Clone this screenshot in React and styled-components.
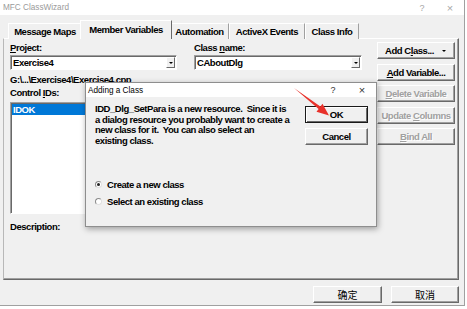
import React from 'react'
import styled, { createGlobalStyle } from 'styled-components'

const UI_FONT = '"Liberation Sans", Arial, sans-serif'
const CJK_FONT = '"Noto Sans CJK SC", "Liberation Sans", sans-serif'

const GlobalStyle = createGlobalStyle`
  html, body { margin: 0; padding: 0; background: #fff; }
  body { font-family: ${UI_FONT}; }
  * { box-sizing: border-box; }
`

const uiText = `
  font-family: ${UI_FONT};
  font-size: 9.5px;
  font-weight: bold;
  letter-spacing: -0.45px;
`

const Window = styled.div`
  position: relative;
  width: 465px;
  height: 306px;
  background: #f0f0f0;
  border-right: 1px solid #a0a0a0;
  border-bottom: 1px solid #a0a0a0;
  display: flex;
  flex-direction: column;
  overflow: hidden;
`

const TitleBar = styled.div`
  height: ${p => p.$h}px;
  flex: none;
  background: #fff;
  display: flex;
  align-items: center;
  padding-left: ${p => p.$pad}px;
  font: 8.2px ${UI_FONT};
  color: ${p => (p.$inactive ? '#9a9a9a' : '#000')};
`

const TitleText = styled.span`
  flex: 1;
`

const TitleGlyph = styled.span`
  width: ${p => p.$w}px;
  text-align: center;
  font: ${p => p.$size}px ${UI_FONT};
  color: ${p => (p.$inactive ? '#a8a8a8' : '#333')};
`

const Body = styled.div`
  flex: 1;
  display: flex;
  flex-direction: column;
  padding: 5px 0 0 3px;
`

const Tabs = styled.div`
  display: flex;
  align-items: flex-end;
  height: 19px;
  padding-left: 5px;
  margin-bottom: -1px;
  position: relative;
  z-index: 1;
`

const Tab = styled.div`
  position: relative;
  width: ${p => p.$w}px;
  height: ${p => (p.$active ? 19 : 16)}px;
  margin: 0 ${p => (p.$active ? -2 : 0)}px;
  z-index: ${p => (p.$active ? 2 : 1)};
  display: flex;
  align-items: center;
  justify-content: center;
  padding-bottom: ${p => (p.$active ? 2 : 0)}px;
  background: #f0f0f0;
  border-top: 1px solid #fff;
  border-left: 1px solid #fff;
  border-right: 1px solid ${p => (p.$active ? '#696969' : '#a0a0a0')};
  ${uiText}
  color: #000;
  white-space: nowrap;
`

const TabPage = styled.div`
  width: 456px;
  height: 242px;
  display: flex;
  padding: 3px 0 0 6px;
  border: 1px solid;
  border-color: #fff #696969 #696969 #b8b8b8;
  box-shadow: inset -1px -1px #a0a0a0;
`

const LeftPane = styled.div`
  width: 352px;
  display: flex;
  flex-direction: column;
`

const FieldRow = styled.div`
  display: grid;
  grid-template-columns: 167px 168px;
  column-gap: 17px;
`

const Field = styled.div`
  display: flex;
  flex-direction: column;
`

const Label = styled.div`
  height: ${p => p.$h || 10}px;
  line-height: ${p => p.$h || 10}px;
  margin-top: ${p => p.$mt || 0}px;
  ${uiText}
  color: #000;
  white-space: nowrap;
`

const Combo = styled.div`
  margin-top: 2px;
  height: 15px;
  display: flex;
  align-items: center;
  justify-content: space-between;
  padding: 0 1px 0 2px;
  background: #fff;
  border: 1px solid;
  border-color: #a0a0a0 #fff #fff #a0a0a0;
  box-shadow: inset 1px 1px #696969;
  ${uiText}
`

const ComboButton = styled.span`
  width: 9px;
  height: 11px;
  display: flex;
  align-items: center;
  justify-content: center;
  background: #f0f0f0;
  border: 1px solid;
  border-color: #fff #696969 #696969 #fff;
`

const Caret = styled.span`
  width: 0;
  height: 0;
  border-left: ${p => p.$s}px solid transparent;
  border-right: ${p => p.$s}px solid transparent;
  border-top: ${p => p.$s}px solid #000;
`

const ListBox = styled.div`
  margin-top: 4px;
  height: 112px;
  padding: 1px;
  background: #fff;
  border: 1px solid;
  border-color: #a0a0a0 #fff #fff #a0a0a0;
  box-shadow: inset 1px 1px #696969;
`

const ListItem = styled.div`
  height: 11px;
  line-height: 11px;
  padding-left: 1px;
  background: ${p => (p.$selected ? '#0078d7' : 'transparent')};
  color: ${p => (p.$selected ? '#fff' : '#000')};
  ${uiText}
`

const RightPane = styled.div`
  width: 78px;
  margin-left: 15px;
  display: flex;
  flex-direction: column;
  gap: 4.5px;
`

const Button = styled.button`
  display: block;
  width: ${p => (p.$w ? `${p.$w}px` : '100%')};
  height: 17px;
  flex: none;
  padding: 0;
  text-align: center;
  line-height: 15px;
  background: #f0f0f0;
  border: 1px solid;
  border-color: ${p => (p.$default ? '#1a1a1a' : '#fff #696969 #696969 #fff')};
  box-shadow: ${p =>
    p.$default ? 'inset 1px 1px #fff, inset -1px -1px #696969' : 'inset -1px -1px #a0a0a0'};
  ${uiText}
  ${p => (p.$cjk ? `font: 10px ${CJK_FONT}; letter-spacing: 0;` : '')}
  color: ${p => (p.disabled ? '#a0a0a0' : '#000')};
  text-shadow: ${p => (p.disabled ? '1px 1px #fff' : 'none')};
  white-space: nowrap;
  cursor: default;
`

const SplitButton = styled(Button)`
  display: flex;
  align-items: center;
  justify-content: space-between;
  padding: 0 8px 0 7px;
`

const Footer = styled.div`
  display: flex;
  justify-content: flex-end;
  gap: 9px;
  padding: 6px 5px 0 0;
`

const Dialog = styled.div`
  position: absolute;
  left: 85px;
  top: 82px;
  width: 292px;
  height: 145px;
  display: flex;
  flex-direction: column;
  background: #f0f0f0;
  border: 1px solid #8e8e8e;
  box-shadow: 1px 2px 6px rgba(0, 0, 0, 0.35);
  z-index: 5;
`

const DialogBody = styled.div`
  flex: 1;
  padding: 7px 8px 0 9px;
  display: flex;
  flex-direction: column;
`

const TopRow = styled.div`
  display: flex;
  justify-content: space-between;
`

const Message = styled.div`
  ${uiText}
  line-height: 10.5px;
  white-space: pre;
  color: #000;
`

const DialogButtons = styled.div`
  width: 63px;
  margin-top: 2px;
  display: flex;
  flex-direction: column;
  gap: 5px;
`

const RadioGroup = styled.div`
  margin-top: 32px;
  display: flex;
  flex-direction: column;
  gap: 5px;
`

const RadioRow = styled.div`
  height: 12px;
  display: flex;
  align-items: center;
  gap: 5px;
  ${uiText}
`

const RadioDot = styled.span`
  width: 7px;
  height: 7px;
  border-radius: 50%;
  display: flex;
  align-items: center;
  justify-content: center;
  background: #fff;
  border: 1px solid;
  border-color: #8a8a8a #e0e0e0 #e0e0e0 #8a8a8a;

  &::after {
    content: '';
    width: 3px;
    height: 3px;
    border-radius: 50%;
    background: ${p => (p.$checked ? '#222' : 'transparent')};
  }
`

const Pointer = styled.svg`
  position: absolute;
  left: 288px;
  top: 84px;
  z-index: 6;
`

const tabs = [
  { label: 'Message Maps', w: 74 },
  { label: 'Member Variables', w: 92, active: true },
  { label: 'Automation', w: 59 },
  { label: 'ActiveX Events', w: 76 },
  { label: 'Class Info', w: 54 },
]

const message = [
  'IDD_Dlg_SetPara is a new resource.  Since it is',
  'a dialog resource you probably want to create a',
  'new class for it.  You can also select an',
  'existing class.',
]

export default function App() {
  return (
    <>
      <GlobalStyle />
      <Window>
        <TitleBar $h={15} $pad={3} $inactive>
          <TitleText>MFC ClassWizard</TitleText>
          <TitleGlyph $w={28} $size={9} $inactive>?</TitleGlyph>
          <TitleGlyph $w={28} $size={11} $inactive>×</TitleGlyph>
        </TitleBar>

        <Body>
          <Tabs>
            {tabs.map(t => (
              <Tab key={t.label} $w={t.w} $active={t.active}>{t.label}</Tab>
            ))}
          </Tabs>

          <TabPage>
            <LeftPane>
              <FieldRow>
                <Field>
                  <Label $h={11}><u>P</u>roject:</Label>
                  <Combo>
                    Exercise4
                    <ComboButton><Caret $s={2} /></ComboButton>
                  </Combo>
                </Field>
                <Field>
                  <Label $h={11}>Class <u>n</u>ame:</Label>
                  <Combo>
                    CAboutDlg
                    <ComboButton><Caret $s={2} /></ComboButton>
                  </Combo>
                </Field>
              </FieldRow>
              <Label $mt={5}>G:\...\Exercise4\Exercise4.cpp</Label>
              <Label $mt={3}>Control <u>I</u>Ds:</Label>
              <ListBox>
                <ListItem $selected>IDOK</ListItem>
              </ListBox>
              <Label $mt={8}>Description:</Label>
            </LeftPane>

            <RightPane>
              <SplitButton>
                <span>Add C<u>l</u>ass...</span>
                <Caret $s={2.5} />
              </SplitButton>
              <Button><u>A</u>dd Variable...</Button>
              <Button disabled><u>D</u>elete Variable</Button>
              <Button disabled>Update <u>C</u>olumns</Button>
              <Button disabled><u>B</u>ind All</Button>
            </RightPane>
          </TabPage>

          <Footer>
            <Button $cjk $w={69}>确定</Button>
            <Button $cjk $w={68}>取消</Button>
          </Footer>
        </Body>

        <Dialog>
          <TitleBar $h={14} $pad={2}>
            <TitleText>Adding a Class</TitleText>
            <TitleGlyph $w={30} $size={9}>?</TitleGlyph>
            <TitleGlyph $w={28} $size={11}>×</TitleGlyph>
          </TitleBar>
          <DialogBody>
            <TopRow>
              <Message>{message.join('\n')}</Message>
              <DialogButtons>
                <Button $default>OK</Button>
                <Button>Cancel</Button>
              </DialogButtons>
            </TopRow>
            <RadioGroup>
              <RadioRow><RadioDot $checked />Create a new class</RadioRow>
              <RadioRow><RadioDot />Select an existing class</RadioRow>
            </RadioGroup>
          </DialogBody>
        </Dialog>

        <Pointer width="45" height="36" viewBox="0 0 45 36">
          <path d="M6 4 L32.4 22.5 L34.5 19.8 L41 31.5 L28.5 27.7 L30.6 24.9 Z" fill="#e8312a" />
        </Pointer>
      </Window>
    </>
  )
}
